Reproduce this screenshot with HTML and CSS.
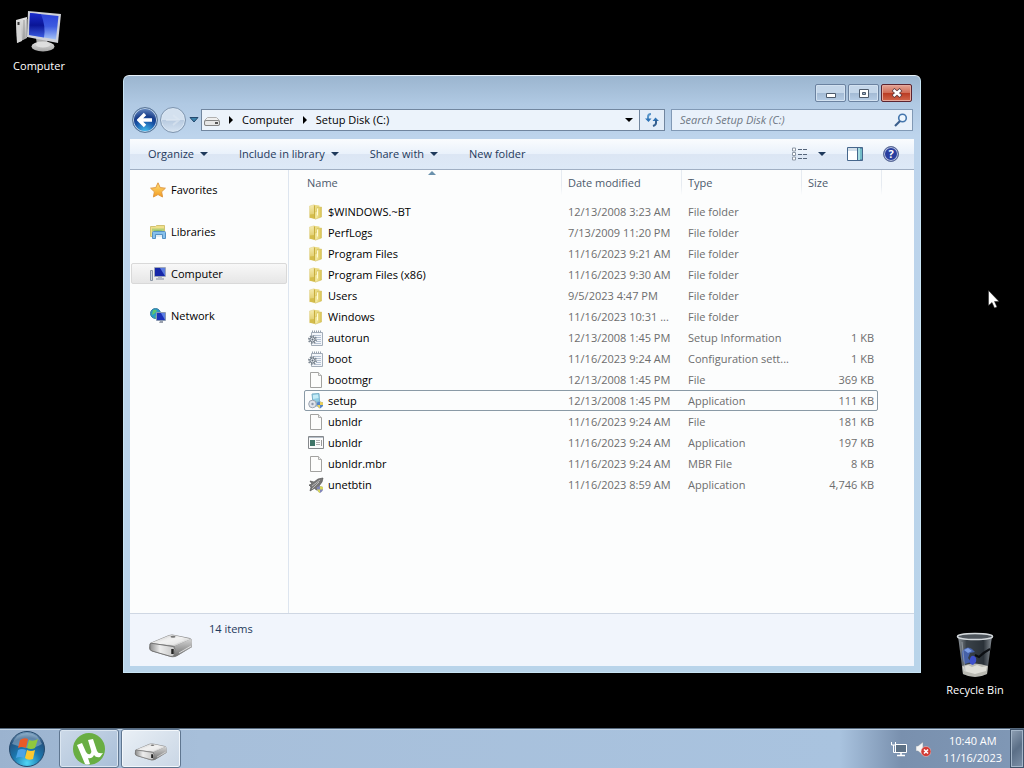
FILE: index.html
```html
<!DOCTYPE html>
<html lang="en">
  <head>
    <meta charset="UTF-8" />
    <title>Setup Disk (C:)</title>
    <link rel="stylesheet" href="styles.css">
  </head>
  <body>
    <!-- Shared icons -->
    <svg class="sprite" aria-hidden="true">
      <defs>
        <linearGradient id="screen" x1="0" y1="0" x2="0" y2="1">
          <stop offset="0" stop-color="#2a40d8" />
          <stop offset="0.5" stop-color="#3d5be0" />
          <stop offset="1" stop-color="#a3c2f8" />
        </linearGradient>
        <linearGradient id="screenDark" x1="0" y1="0" x2="0" y2="1">
          <stop offset="0" stop-color="#1a2ccc" />
          <stop offset="0.5" stop-color="#0a1596" />
          <stop offset="1" stop-color="#3a5be0" />
        </linearGradient>
        <linearGradient id="metal" x1="0" y1="0" x2="0" y2="1">
          <stop offset="0" stop-color="#e4e4e4" />
          <stop offset="1" stop-color="#a4a4a4" />
        </linearGradient>
        <linearGradient id="driveTop" x1="0" y1="0" x2="1" y2="1">
          <stop offset="0" stop-color="#c9c9c9" />
          <stop offset="0.5" stop-color="#f3f3f3" />
          <stop offset="1" stop-color="#b5b5b5" />
        </linearGradient>
        <linearGradient id="driveFront" x1="0" y1="0" x2="1" y2="0">
          <stop offset="0" stop-color="#8d8d8d" />
          <stop offset="0.4" stop-color="#ededed" />
          <stop offset="1" stop-color="#c4c4c4" />
        </linearGradient>
        <linearGradient id="driveSide" x1="0" y1="0" x2="0" y2="1">
          <stop offset="0" stop-color="#d4d4d4" />
          <stop offset="1" stop-color="#6f6f6f" />
        </linearGradient>
        <linearGradient id="folderBack" x1="0" y1="0" x2="0" y2="1">
          <stop offset="0" stop-color="#f6ecb0" />
          <stop offset="1" stop-color="#dcc75f" />
        </linearGradient>
        <linearGradient id="folderFront" x1="0" y1="0" x2="1" y2="0">
          <stop offset="0" stop-color="#fbf3b4" />
          <stop offset="1" stop-color="#d9c24f" />
        </linearGradient>
        <linearGradient id="star" x1="0" y1="0" x2="0" y2="1">
          <stop offset="0" stop-color="#ffe27a" />
          <stop offset="1" stop-color="#f39a1e" />
        </linearGradient>
        <linearGradient id="glass" x1="0" y1="0" x2="1" y2="0">
          <stop offset="0" stop-color="#8b9298" />
          <stop offset="0.25" stop-color="#3a4249" />
          <stop offset="0.75" stop-color="#2a3138" />
          <stop offset="1" stop-color="#878e95" />
        </linearGradient>
        <radialGradient id="orb" cx="0.5" cy="0.9" r="0.9">
          <stop offset="0" stop-color="#4fd6f5" />
          <stop offset="0.45" stop-color="#1b76ad" />
          <stop offset="0.8" stop-color="#235280" />
          <stop offset="1" stop-color="#7fa5c4" />
        </radialGradient>
      </defs>
      <symbol id="i-folder" viewBox="0 0 16 16">
        <path d="M1.500 2 6 .800V13l-4.500.800z" fill="url(#folderBack)" stroke="#e0d08a" stroke-width="0.500" />
        <path d="M6 .800l5.500.700v11L6 14z" fill="#eadb84" />
        <path d="M2 10.500 6.500 10v5L2 13.800z" fill="#d4bd4c" />
        <path d="M6.500 1.500v13" stroke="#c8ad3d" />
        <path d="M7 8 9 7V3.500l4.500-.500v10L7 15.200z" fill="url(#folderFront)" stroke="#cdb850" stroke-width="0.500" />
        <path d="M9.500 4.500v7" stroke="#fffbd8" />
      </symbol>
      <symbol id="i-file" viewBox="0 0 16 16">
        <path d="M2.500.500h8l3 3v12h-11z" fill="#fdfdfc" stroke="#a2a2a0" />
        <path d="M10.500.500v3h3" fill="#eee" stroke="#b0b0ae" />
      </symbol>
      <symbol id="i-config" viewBox="0 0 16 16">
        <path d="M3.500 2.500h11v13h-11z" fill="#f3f6fa" stroke="#a3adb9" />
        <path d="M4 1.500h10" stroke="#97a2af" stroke-dasharray="1 1" stroke-width="2" />
        <path d="M6 5.500h7M8 7.500h5M9 9.500h4M8 11.500h5M7 13.500h6" stroke="#b4c1d2" />
        <circle cx="4.500" cy="9.500" r="3.500" fill="none" stroke="#7c8792" stroke-width="2" stroke-dasharray="1.500 1.200" />
        <circle cx="4.500" cy="9.500" r="2.500" fill="#dfe4ea" stroke="#6d7884" />
        <circle cx="4.500" cy="9.500" r="1" fill="#65707c" />
      </symbol>
      <symbol id="i-setup" viewBox="0 0 16 16">
        <path d="M4 1 11 .500l.500 8L5 10z" fill="#8fcde4" stroke="#7bb0c8" />
        <path d="M5 2 10 1.500l.500 3.500L5 6z" fill="#c4ecf7" />
        <path d="M6 9.500h7l2 4H5z" fill="#7fabca" />
        <circle cx="4.500" cy="11" r="3.800" fill="#dfe3ea" stroke="#9aa4b0" />
        <circle cx="4.500" cy="11" r="1.200" fill="#8c98ab" />
        <path d="M9 9.500 12 8.500l3 1v3q-1 2-3 3-2-1-3-3z" fill="#5485c8" />
        <path d="M12 8.500l3 1V12h-3zM9 12h3v3.500q-2-1-3-3.500z" fill="#e8cf5c" />
      </symbol>
      <symbol id="i-app" viewBox="0 0 16 16">
        <path d="M.500 1.500h15v12H.500z" fill="#fbfbfb" stroke="#85888c" />
        <path d="M1 2.500h14" stroke="#b5bfc8" />
        <path d="M2 5h5v6H2z" fill="#3f7568" />
        <path d="M8 5.500h4M8 7.500h4M8 9.500h4" stroke="#b0b0b0" />
        <path d="M13.500 5v6" stroke="#999" />
      </symbol>
      <symbol id="i-unet" viewBox="0 0 16 16">
        <path d="M2 4l4 1 4-3 5-1-1 4-3 4 1 3-4 1-1-2-5 3 1-4-2-2 3-1z" fill="#777" stroke="#555" stroke-width="0.700" />
        <path d="M4 9 12 3M4 12l7-7" stroke="#b9b9b9" />
        <path d="M9 10l3-1 3 1v3q-1 2-3 3-2-1-3-3z" fill="#8286b8" />
        <path d="M12 9l3 1v2.500h-3zM9 12.500h3V16q-2-1-3-3.500z" fill="#d8d75b" />
      </symbol>
      <symbol id="i-drive" viewBox="0 0 46 26">
        <path d="M2 10 21 2q3-1 6 0l15 3q2 1 2 3v6L29 23q-3 2-6 1L3 18q-2-1-2-3z" fill="#8a8a8a" />
        <path d="M3 10 21 2.500q3-1 6 0L43 6 27 13z" fill="url(#driveTop)" />
        <path d="M10 9.500 22 4l15 3-12 5z" fill="#efefef" opacity="0.700" />
        <path d="M27 13l16-7q1 1 1 3v5L29 23q-3 1-4 0z" fill="url(#driveSide)" />
        <path d="M31 20l12-7" stroke="#ededed" opacity="0.800" />
        <path d="M2 11q1-1 3-.500l20 3q2 1 2 3l-1 6q-1 1-3 1L4 18q-2-1-2-3z" fill="url(#driveFront)" stroke="#777" />
        <path d="M24.500 16v5" stroke="#222" stroke-width="2.500" />
        <ellipse cx="25" cy="3.800" rx="2.500" ry="1" fill="#777" />
      </symbol>
      <symbol id="i-computer" viewBox="0 0 46 42">
        <path d="M0 9 11 6v21L1 32z" fill="url(#metal)" />
        <path d="M0 9l5 1 1 20-5 2z" fill="#d4d4d4" />
        <path d="M2.500 11v3" stroke="#333" stroke-width="2" />
        <path d="M11 8v18M8 9v19" stroke="#999" />
        <path d="M20 27l11 2 1 5H21z" fill="#aaa" />
        <ellipse cx="27" cy="35.500" rx="11.500" ry="5" fill="url(#metal)" />
        <ellipse cx="27" cy="34" rx="7" ry="2.500" fill="#dedede" />
        <path d="M12 0 45 3l-3 29-31-6z" fill="#cfd1d8" />
        <path d="M14 2 42.500 5 40 28.500 13 24z" fill="url(#screen)" />
        <path d="M14 2 25 3.200q5 12 3 23.300L13 24z" fill="url(#screenDark)" />
      </symbol>
      <symbol id="i-pc" viewBox="0 0 16 16">
        <path d="M.500 4.500h2v10h-2z" fill="#d4d8df" stroke="#8b96a5" />
        <path d="M4.500 1.500h11v9h-11z" fill="#c9cfdf" stroke="#9da6b9" />
        <path d="M5 2h10v8H5z" fill="#1627a8" />
        <path d="M10 2h5v8z" fill="#5b7ce0" />
        <path d="M8 11h4v1h2v2H6v-2h2z" fill="#b4b9c4" />
      </symbol>
      <symbol id="i-star" viewBox="0 0 16 16">
        <path d="M8 .800l2.200 4.800 5.200.600-3.800 3.600 1 5.200L8 12.500 3.400 15l1-5.200L.600 6.200l5.200-.600z" fill="url(#star)" stroke="#e09a45" />
      </symbol>
      <symbol id="i-libraries" viewBox="0 0 16 16">
        <path d="M.500 2.500h5l1-1h8v11h-14z" fill="#efe08a" stroke="#d2c273" />
        <path d="M2 4.500h12v3H2z" fill="#b4cf79" />
        <path d="M4 6.500q4-1 8 0v3H4z" fill="#84bb6c" />
        <path d="M2.500 8.500q0-1 1-1h11q1 0 1 1v6h-3v-4h-7v4h-3z" fill="#86c0ec" stroke="#5591c4" />
        <path d="M6 11h6v2H6z" fill="#e2edf2" />
      </symbol>
      <symbol id="i-network" viewBox="0 0 16 16">
        <circle cx="5.500" cy="5.500" r="5" fill="#2b9bc8" stroke="#3a7ca0" />
        <path d="M3 2q3-1 4 1L4 6 2 7zM5 8l3-1v3l-2 1z" fill="#5fc56e" />
        <path d="M6.500 4.500h9v8h-9z" fill="#b9c6de" stroke="#8a98b2" />
        <path d="M7 5h8v7H7z" fill="#1c31b9" />
        <path d="M11 5h4v7z" fill="#5d80e5" />
        <path d="M10 13h3v2H9z" fill="#9aa1ad" />
      </symbol>
    </svg>

    <main class="desktop">
      <a class="shortcut shortcut-computer" href="#">
        <svg width="46" height="42"><use href="#i-computer" /></svg>
        <span>Computer</span>
      </a>

      <a class="shortcut shortcut-bin" href="#">
        <svg width="38" height="47" viewBox="0 0 38 47">
          <path d="M2 4h34l-5 38q-12 6-24 0z" fill="url(#glass)" />
          <path d="M6 34q12-5 26 0l-1 8q-12 6-24 0z" fill="#b9b9b2" />
          <path d="M7 35l5-2 4 2 5-2 5 2 5-1-1 5-11 3-11-3z" fill="#dfdfd8" />
          <path d="M6 19q5-6 10-2l3 3-5 1-2 5 3 4-6 2q-4-6-3-13z" fill="#4661a8" />
          <path d="M8 18l4-2 4 3-4 2z" fill="#7b9de5" />
          <path d="M14 27q1-4 4-3t2 6l-3 3q-5-1-3-6z" fill="#3d50cc" />
          <path d="M34 17q-6 3-11 8l-4-2" stroke="#0b0e12" stroke-width="2" fill="none" />
          <path d="M6 10l3 29" stroke="#a9b0b7" opacity="0.600" />
          <ellipse cx="19" cy="4.500" rx="17.500" ry="3" fill="#4e555c" stroke="#d5dadd" stroke-width="1.500" />
        </svg>
        <span>Recycle Bin</span>
      </a>

      <section class="window">
        <header class="titlebar">
          <div class="captions">
            <button class="caption" aria-label="Minimize">
              <svg width="12" height="12"><path d="M1.500 6.500h9v4h-9z" fill="#fff" stroke="#4d5a6b" /></svg>
            </button>
            <button class="caption" aria-label="Maximize">
              <svg width="12" height="12"><path d="M1.500 2.500h9v8h-9z" fill="#fff" stroke="#4d5a6b" /><path d="M4.500 5.500h3v2h-3z" fill="#9db3cc" stroke="#4d5a6b" /></svg>
            </button>
            <button class="caption caption-close" aria-label="Close">
              <svg width="12" height="12"><path d="M2 2.500l8 7M10 2.500l-8 7" stroke="#5c3a3f" stroke-width="4" /><path d="M2.500 3l7 6M9.500 3l-7 6" stroke="#fff" stroke-width="2.400" /></svg>
            </button>
          </div>
          <nav class="navbar">
            <button class="round back" aria-label="Back">
              <svg width="16" height="16"><path d="M8 2 2 8l6 6M3 8h12" fill="none" stroke="#fff" stroke-width="3.400" /></svg>
            </button>
            <button class="round forward" aria-label="Forward">
              <svg width="16" height="16"><path d="M8 3l6 5-6 5M13 8H1" fill="none" stroke="#dde7f1" stroke-width="2" opacity="0.600" /></svg>
            </button>
            <button class="recent" aria-label="Recent pages">
              <svg width="10" height="6"><path d="M1 .500h8l-4 4.500z" fill="#3b82aa" stroke="#24486e" /></svg>
            </button>
            <div class="address">
              <svg width="16" height="16"><path d="M3.500 5.500h9l3 3V13h-15V8.500z" fill="#efefef" stroke="#b0b0b0" /><rect x="0.500" y="8.500" width="15" height="5" rx="1.500" fill="#e6e6e6" stroke="#858585" /><path d="M11 11h3" stroke="#555" stroke-width="2" /></svg>
              <i class="crumb-arrow"></i>
              <a href="#">Computer</a>
              <i class="crumb-arrow"></i>
              <a href="#">Setup Disk (C:)</a>
              <button class="address-drop" aria-label="Previous locations"><i class="arrow"></i></button>
            </div>
            <button class="refresh" aria-label="Refresh">
              <svg width="16" height="16"><path d="M7 2Q4 2 4 5v3" fill="none" stroke="#5794c8" stroke-width="2" /><path d="M1 6.500h6.500L4.500 10zM8.500 9l3-3.500L15 9z" fill="#2f74b6" /><path d="M12 8v3q0 2-3 3" fill="none" stroke="#345f90" stroke-width="2" /></svg>
            </button>
            <label class="search">
              <input type="text" placeholder="Search Setup Disk (C:)" aria-label="Search Setup Disk (C:)" />
              <svg width="14" height="14"><circle cx="8.500" cy="5" r="3.800" fill="#eef6fd" stroke="#4476ad" stroke-width="1.600" /><path d="M6 8l-5 5" stroke="#3b5f8c" stroke-width="2.200" /></svg>
            </label>
          </nav>
        </header>

        <div class="toolbar">
          <button>Organize <i class="arrow"></i></button>
          <button>Include in library <i class="arrow"></i></button>
          <button>Share with <i class="arrow"></i></button>
          <button>New folder</button>
          <div class="toolbar-right">
            <button aria-label="Change your view">
              <svg width="16" height="14"><path d="M.500 1h3v3h-3zM.500 5.500h3v3h-3zM.500 10h3v3h-3z" fill="#fff" stroke="#8d98a6" /><path d="M6 2.500h4M11 2.500h4M6 7.500h4M11 7.500h4M6 11.500h4M11 11.500h4" stroke="#55657a" /></svg>
            </button>
            <button aria-label="More options"><i class="arrow"></i></button>
            <button aria-label="Show the preview pane">
              <svg width="16" height="14"><path d="M.500.500h15v13H.500z" fill="#fff" stroke="#46678c" /><path d="M1 2.500h9" stroke="#d3dfea" stroke-width="3" /><path d="M10.500 1h5v12h-5z" fill="#72bcc8" stroke="#46678c" /><path d="M11 1h2v12h-2z" fill="#a6dce1" /></svg>
            </button>
            <button class="help" aria-label="Get help">?</button>
          </div>
        </div>

        <div class="content">
          <aside class="tree">
            <a href="#"><svg width="16" height="16"><use href="#i-star" /></svg>Favorites</a>
            <a href="#"><svg width="16" height="16"><use href="#i-libraries" /></svg>Libraries</a>
            <a href="#" class="active"><svg width="16" height="16"><use href="#i-pc" /></svg>Computer</a>
            <a href="#"><svg width="16" height="16"><use href="#i-network" /></svg>Network</a>
          </aside>

          <div class="files">
            <table>
              <colgroup>
                <col class="col-name" />
                <col class="col-date" />
                <col class="col-type" />
                <col class="col-size" />
              </colgroup>
              <thead>
                <tr>
                  <th class="sorted">Name</th>
                  <th>Date modified</th>
                  <th>Type</th>
                  <th>Size</th>
                </tr>
              </thead>
              <tbody id="fileRows"></tbody>
            </table>
          </div>
        </div>

        <footer class="details">
          <svg width="46" height="26"><use href="#i-drive" /></svg>
          <span>14 items</span>
        </footer>
      </section>

      <svg class="cursor" width="12" height="19"><path d="M.500.500v15l3.500-3 2.500 5.500 2.500-1-2.500-5.500H11z" fill="#fff" stroke="#222" stroke-width="0.500" /></svg>
    </main>

    <footer class="taskbar">
      <button class="start" aria-label="Start">
        <svg width="38" height="38" viewBox="0 0 38 38">
          <circle cx="19" cy="19" r="17.500" fill="url(#orb)" stroke="#25496c" />
          <path d="M4 14Q8 3 19 3t15 11q-8 5-15 4T4 14z" fill="#d7e8f4" opacity="0.350" />
          <path d="M12 10q4-3 8-1l-2 9q-4-2-8 0z" fill="#ea5a28" />
          <path d="M21 10q4 2 9-1l-3 9q-4 2-8 0z" fill="#90c83e" />
          <path d="M10 20q4-2 8 0l-2 8q-4-2-8 0z" fill="#4ba3e6" />
          <path d="M19 20q4 2 8 0l-2 9q-5 2-8-1z" fill="#fbc82f" />
        </svg>
      </button>
      <button class="task" aria-label="uTorrent">
        <svg width="34" height="34" viewBox="0 0 34 34">
          <circle cx="17" cy="17" r="16" fill="#69ae43" />
          <path d="M5 13l5-2 4 9q2 3 4 2t1-4L16 8l5-1 4 12q1 3 6 2l-3 4q-4 1-6-2-2 4-6 3l2 6q-2 1-5 0z" fill="#fff" />
        </svg>
      </button>
      <button class="task task-open" aria-label="Setup Disk (C:)">
        <svg width="34" height="20" viewBox="0 0 46 26"><use href="#i-drive" /></svg>
      </button>
      <div class="tray">
        <svg width="16" height="16"><path d="M4.500 3.500h11v8h-11z" fill="#5d7186" stroke="#fff" /><path d="M10 12v2M6 14.500h8" stroke="#fff" stroke-width="1.500" /><path d="M.500 1v3h4V1M2.500 4v7.500H5" fill="none" stroke="#fff" /></svg>
        <svg width="16" height="16"><path d="M1 5h2l5-4v13l-5-4H1z" fill="#f4f4f4" stroke="#8793a0" stroke-width="0.500" /><circle cx="11" cy="10.500" r="5" fill="#d23a34" stroke="#f1d4d2" stroke-width="0.500" /><path d="M9 8.500l4 4M13 8.500l-4 4" stroke="#fff" stroke-width="1.600" /></svg>
        <div class="clock">
          <div>10:40 AM</div>
          <div>11/16/2023</div>
        </div>
        <button class="peek" aria-label="Show desktop"></button>
      </div>
    </footer>

    <script>
      const files = [
        ["folder", "$WINDOWS.~BT", "12/13/2008 3:23 AM", "File folder", ""],
        ["folder", "PerfLogs", "7/13/2009 11:20 PM", "File folder", ""],
        ["folder", "Program Files", "11/16/2023 9:21 AM", "File folder", ""],
        ["folder", "Program Files (x86)", "11/16/2023 9:30 AM", "File folder", ""],
        ["folder", "Users", "9/5/2023 4:47 PM", "File folder", ""],
        ["folder", "Windows", "11/16/2023 10:31 ...", "File folder", ""],
        ["config", "autorun", "12/13/2008 1:45 PM", "Setup Information", "1 KB"],
        ["config", "boot", "11/16/2023 9:24 AM", "Configuration sett...", "1 KB"],
        ["file", "bootmgr", "12/13/2008 1:45 PM", "File", "369 KB"],
        ["setup", "setup", "12/13/2008 1:45 PM", "Application", "111 KB"],
        ["file", "ubnldr", "11/16/2023 9:24 AM", "File", "181 KB"],
        ["app", "ubnldr", "11/16/2023 9:24 AM", "Application", "197 KB"],
        ["file", "ubnldr.mbr", "11/16/2023 9:24 AM", "MBR File", "8 KB"],
        ["unet", "unetbtin", "11/16/2023 8:59 AM", "Application", "4,746 KB"],
      ];

      const tbody = document.getElementById("fileRows");
      files.forEach(([icon, name, date, type, size]) => {
        const row = document.createElement("tr");
        if (name === "setup") row.className = "focused";
        row.innerHTML = `
          <td><div class="file-name"><svg width="16" height="16"><use href="#i-${icon}" /></svg>${name}</div></td>
          <td>${date}</td>
          <td>${type}</td>
          <td>${size}</td>
        `;
        tbody.appendChild(row);
      });
    </script>
  </body>
</html>
```
FILE: styles.css
```css
* {
  box-sizing: border-box;
}
body {
  margin: 0;
  height: 100vh;
  display: flex;
  flex-direction: column;
  overflow: hidden;
  background: #000;
  color: #000;
  font-family: "Open Sans", "Noto Sans", sans-serif;
  font-size: 11px;
  line-height: 16px;
}
a {
  color: inherit;
  text-decoration: none;
}
button {
  display: flex;
  align-items: center;
  justify-content: center;
  padding: 0;
  border: none;
  background: none;
  color: inherit;
  font: inherit;
}
svg {
  display: block;
  flex: none;
}
.sprite {
  position: absolute;
  width: 0;
  height: 0;
}
.arrow {
  border: 4px solid transparent;
  border-top-color: currentColor;
  border-bottom: none;
}

/* Desktop */
.desktop {
  flex: 1;
  position: relative;
}
.shortcut {
  position: absolute;
  width: 76px;
  display: flex;
  flex-direction: column;
  align-items: center;
  color: #fff;
}
.shortcut-computer {
  left: 1px;
  top: 11px;
  gap: 5px;
}
.shortcut-bin {
  right: 11px;
  bottom: 30px;
  gap: 3px;
}
.cursor {
  position: absolute;
  left: 988px;
  top: 290px;
}

/* Window */
.window {
  position: absolute;
  inset: 75px 103px 55px 123px;
  display: flex;
  flex-direction: column;
  padding: 0 6px 6px;
  border: 1px solid #c8e4f4;
  border-top-color: #e8f2fa;
  border-radius: 6px 6px 0 0;
  background: linear-gradient(#9bb5cf, #b0c9e3 28px, #bdd4ec 60px, #b9d4ea);
}
.titlebar {
  padding: 8px 1px 7px 2px;
}
.captions {
  display: flex;
  justify-content: flex-end;
  gap: 2px;
  margin: 0 1px 6px 0;
}
.caption {
  width: 31px;
  height: 18px;
  border: 1px solid #6b82a0;
  border-radius: 2px;
  background: linear-gradient(#c5d7ea 50%, #a3bad4 50%, #b6cde6);
  box-shadow: inset 0 0 0 1px #d3e2f1;
}
.caption-close {
  border-color: #5b2430;
  background: linear-gradient(#e4a596, #cf6a54 50%, #b93a22 50%, #d2674c);
  box-shadow: inset 0 0 0 1px #e6a99c;
}
.navbar {
  display: flex;
  align-items: center;
  height: 24px;
}
.round {
  width: 26px;
  height: 26px;
  border-radius: 50%;
  border: 1px solid #5c7797;
}
.back {
  background: radial-gradient(circle at 50% 100%, #45c4f3, #1750a4 45%, #1a3f8b 60%, #86a8d6);
  box-shadow: inset 0 0 0 1px #b9cfe7;
}
.forward {
  margin-left: 2px;
  border-color: #7f95ae;
  background: linear-gradient(#d4e1ef 50%, #b7cae0 50%, #d5e3f2);
  box-shadow: inset 0 0 0 1px #d9e6f3;
}
.recent {
  width: 15px;
}
.address {
  flex: 1;
  display: flex;
  align-items: center;
  height: 22px;
  padding-left: 2px;
  border: 1px solid #71869f;
  background: #ecf3fb;
}
.crumb-arrow {
  margin: 0 9px;
  border: 4px solid transparent;
  border-left-color: #000;
  border-right: none;
}
.address-drop {
  width: 20px;
  height: 20px;
  margin-left: auto;
}
.refresh {
  width: 25px;
  height: 22px;
  margin-right: 6px;
  border: 1px solid #71869f;
  border-left: none;
  background: #e3edf8;
}
.search {
  display: flex;
  align-items: center;
  width: 242px;
  height: 22px;
  padding: 0 4px 0 8px;
  border: 1px solid #8199b5;
  background: #e9f1fa;
}
.search input {
  flex: 1;
  min-width: 0;
  padding: 0;
  border: none;
  background: none;
  font: inherit;
  font-style: italic;
}
.search input::placeholder {
  color: #6e7783;
}

/* Toolbar */
.toolbar {
  display: flex;
  align-items: center;
  gap: 31px;
  height: 31px;
  padding: 0 15px 0 18px;
  border-bottom: 1px solid #a0afc3;
  background: linear-gradient(#fafcfe, #e9f1fb 50%, #dce6f4 50%, #dde9f7);
  color: #1e395b;
}
.toolbar button {
  gap: 6px;
}
.toolbar-right {
  display: flex;
  align-items: center;
  margin-left: auto;
}
.toolbar-right button:nth-child(2) {
  margin: 0 21px 0 10px;
}
.toolbar .help {
  width: 16px;
  height: 16px;
  margin-left: 20px;
  border: 1px solid #5d6d96;
  border-radius: 50%;
  background: #293e9f;
  box-shadow: inset 0 0 0 1px #b9c4de;
  color: #fff;
  font-weight: bold;
}

/* Content */
.content {
  flex: 1;
  display: flex;
  min-height: 0;
  background: #fcfdfd;
}
.tree {
  width: 159px;
  padding: 9px 1px;
  display: flex;
  flex-direction: column;
  gap: 21px;
  border-right: 1px solid #dde5ef;
}
.tree a {
  display: flex;
  align-items: center;
  gap: 5px;
  height: 21px;
  padding-left: 18px;
  border: 1px solid transparent;
  border-radius: 2px;
}
.tree .active {
  border-color: #d9d9d9;
  background: linear-gradient(#f8f8f8, #e6e6e6);
}
.files {
  flex: 1;
  padding-left: 15px;
  overflow: hidden;
}
table {
  width: 578px;
  table-layout: fixed;
  border-collapse: separate;
  border-spacing: 0;
}
.col-name {
  width: 258px;
}
.col-date,
.col-type {
  width: 120px;
}
.col-size {
  width: 80px;
}
th {
  height: 31px;
  padding: 5px 6px 10px;
  border-right: 1px solid;
  border-image: linear-gradient(#e6ebf1 50%, transparent 80%) 1;
  border-image-width: 0 1px 0 0;
  color: #4c5a6c;
  font-weight: normal;
  text-align: left;
}
.sorted {
  position: relative;
  padding-left: 3px;
}
.sorted::after {
  content: "";
  position: absolute;
  top: 1px;
  left: 50%;
  margin-left: -5px;
  border: 4px solid transparent;
  border-top: none;
  border-bottom-color: #6a91ac;
}
td {
  height: 21px;
  padding: 0 6px;
  color: #6d6d6d;
  white-space: nowrap;
}
td:first-child {
  padding-left: 4px;
  color: #000;
}
td:last-child {
  padding-right: 8px;
  text-align: right;
}
.file-name {
  display: flex;
  align-items: center;
  gap: 4px;
}
.focused {
  position: relative;
}
.focused::after {
  content: "";
  position: absolute;
  inset: 0 4px 0 0;
  border: 1px solid #8a9aa6;
  border-radius: 2px;
}
.details {
  display: flex;
  gap: 15px;
  height: 53px;
  padding: 7px 18px;
  border-top: 1px solid #cfd7e3;
  background: #f1f5fc;
  color: #1e395b;
}
.details svg {
  align-self: flex-end;
}

/* Taskbar */
.taskbar {
  display: flex;
  height: 40px;
  border-top: 1px solid #56697d;
  background: linear-gradient(to right, #9bb3cf, #a7bfda 200px, #a9c3df 82%, #7990ae 88%, #8098b6);
  box-shadow: inset 0 1px 0 #c3d4e5;
}
.start {
  width: 54px;
  margin-right: 5px;
}
.task {
  width: 60px;
  margin-right: 2px;
  border: 1px solid #5f7690;
  border-radius: 3px;
  background: linear-gradient(135deg, #ccd9e8, #a9bfd8);
  box-shadow: inset 0 0 0 1px #dbe6f1;
}
.task-open {
  padding-top: 6px;
  background: linear-gradient(135deg, #eaf0f6, #c9d6e5);
  box-shadow: inset 0 0 0 1px #f3f7fb;
}
.tray {
  display: flex;
  align-items: center;
  gap: 8px;
  margin-left: auto;
  color: #fff;
}
.clock {
  margin-left: 5px;
  line-height: 17px;
  text-align: center;
}
.peek {
  align-self: stretch;
  width: 14px;
  border: 1px solid #41546b;
  background: linear-gradient(135deg, #8fa0b4, #5b6f87 50%, #7d90a7);
  box-shadow: inset 0 0 0 1px #a4b6c9;
}
```
